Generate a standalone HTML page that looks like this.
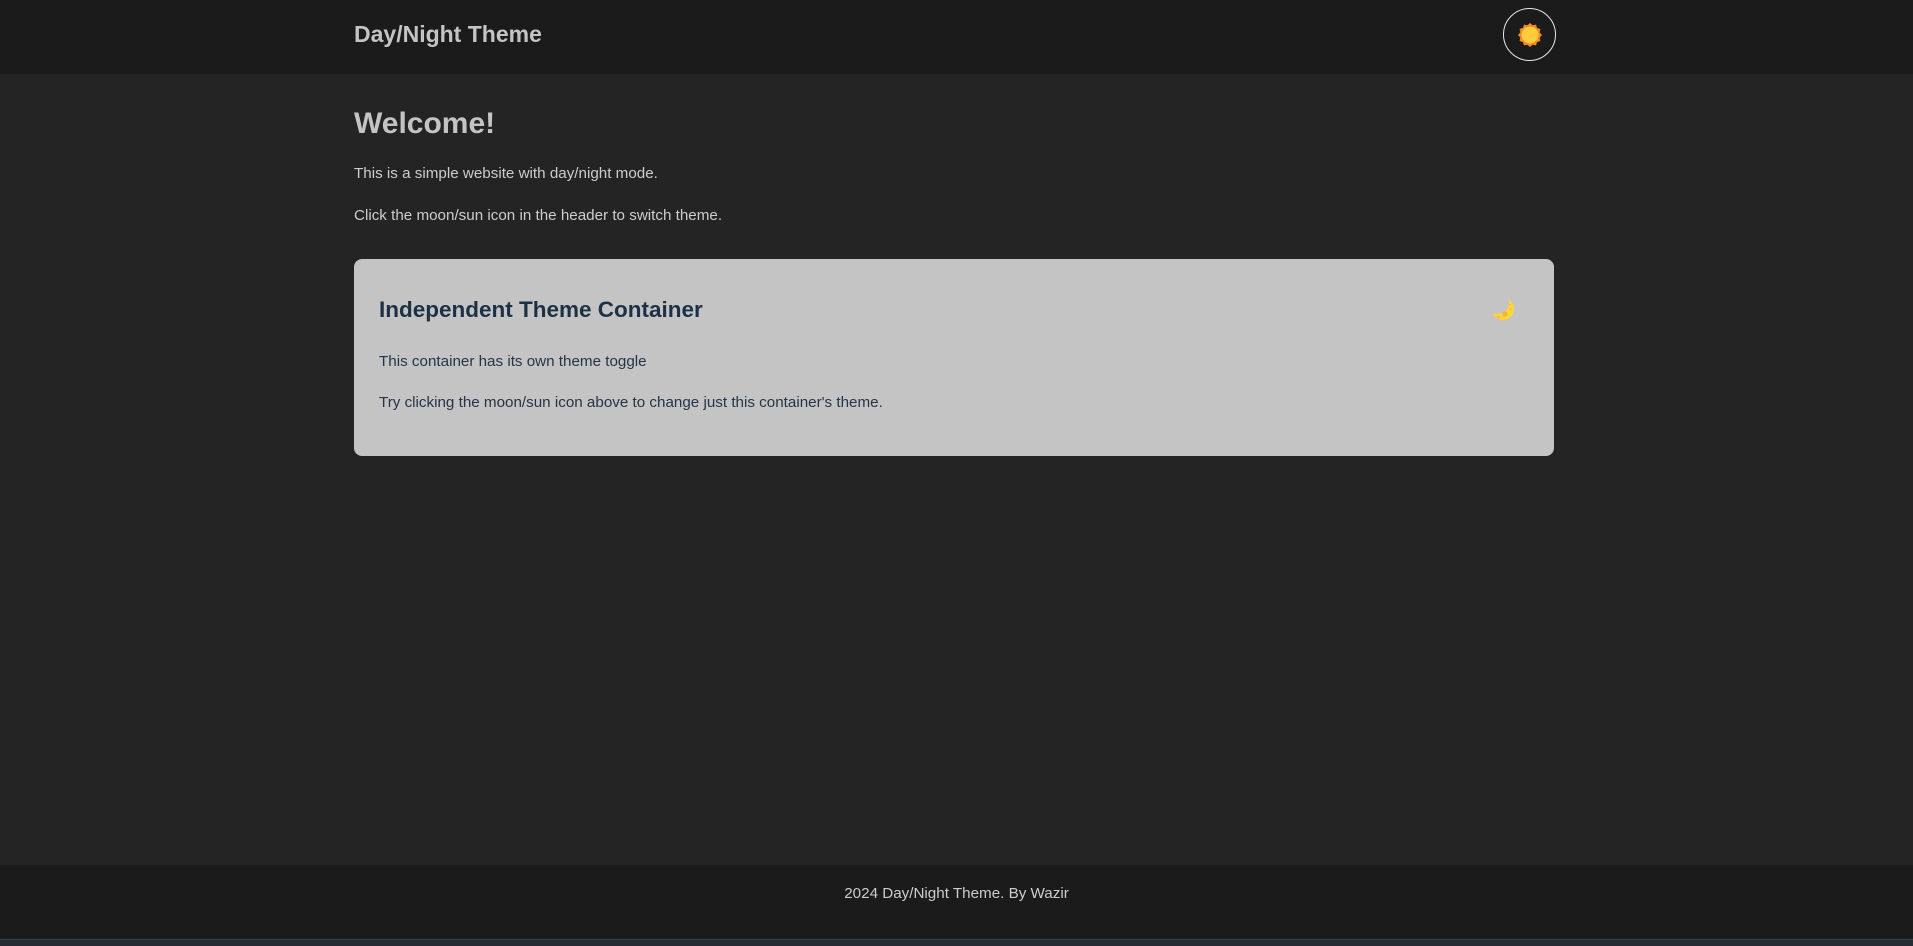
<!DOCTYPE html>
<html><head><meta charset="utf-8"><style>
html,body{margin:0;padding:0;}
body{width:1913px;height:945px;background:#242424;font-family:"Liberation Sans",sans-serif;position:relative;overflow:hidden;color:#c8c8c8;}
header{position:absolute;left:0;top:0;width:1913px;height:74px;background:#1b1b1b;}
.logo{position:absolute;left:354px;top:21px;font-size:23px;font-weight:bold;color:#c4c4c4;}
.btn{position:absolute;left:1503px;top:8px;width:51px;height:51px;border:1.5px solid #e8e8e8;border-radius:50%;}
.btn svg{position:absolute;left:14px;top:14px;}
h1{position:absolute;left:354px;top:107px;margin:0;font-size:30px;font-weight:bold;color:#c4c4c4;}
.p{position:absolute;left:354px;font-size:15.2px;color:#cdcdcd;}
.card{position:absolute;left:354px;top:259px;width:1200px;height:197px;background:#c4c4c4;border-radius:8px;}
.card h2{position:absolute;left:25px;top:38px;margin:0;font-size:22.5px;font-weight:bold;color:#1d3146;}
.card .t{position:absolute;left:25px;font-size:15.2px;color:#243548;}
.moon{position:absolute;left:1134px;top:36px;}
footer{position:absolute;left:0;top:865px;width:1913px;height:75px;background:#1b1b1b;text-align:center;}
footer span{position:relative;top:20px;font-size:15.2px;color:#cdcdcd;}
.strip{position:absolute;left:0;top:939px;width:1913px;height:6px;background:#262b32;border-top:1px solid #3a4048;}
</style></head><body>
<header><div class="logo">Day/Night Theme</div>
<div class="btn"><svg width="24" height="24" viewBox="0 0 24 24">
<polygon fill="#f7871f" points="12,0 14.6,2.3 18,1.6 19,4.9 22.4,6 21.7,9.4 24,12 21.7,14.6 22.4,18 19,19.1 18,22.4 14.6,21.7 12,24 9.4,21.7 6,22.4 4.9,19.1 1.6,18 2.3,14.6 0,12 2.3,9.4 1.6,6 4.9,4.9 6,1.6 9.4,2.3"/>
<circle cx="12" cy="12" r="8.5" fill="#ffcc3e"/></svg></div></header>
<h1>Welcome!</h1>
<div class="p" style="top:165px">This is a simple website with day/night mode.</div>
<div class="p" style="top:207px">Click the moon/sun icon in the header to switch theme.</div>
<div class="card"><h2>Independent Theme Container</h2>
<div class="moon"><svg width="30" height="30" viewBox="0 0 30 30">
<defs><mask id="m"><rect width="30" height="30" fill="#fff"/><circle cx="10" cy="8" r="11" fill="#000"/></mask></defs>
<circle cx="15" cy="14" r="11" fill="#fdd43a" mask="url(#m)"/>
<circle cx="17" cy="19" r="2.6" fill="#f2b733"/><circle cx="10.5" cy="22" r="1.1" fill="#f2b733"/><circle cx="22.5" cy="14" r="0.9" fill="#f2b733"/><circle cx="22" cy="9.5" r="0.8" fill="#f2b733"/></svg></div>
<div class="t" style="top:94px">This container has its own theme toggle</div>
<div class="t" style="top:135px">Try clicking the moon/sun icon above to change just this container's theme.</div>
</div>
<footer><span>2024 Day/Night Theme. By Wazir</span></footer>
<div class="strip"></div>
</body></html>
